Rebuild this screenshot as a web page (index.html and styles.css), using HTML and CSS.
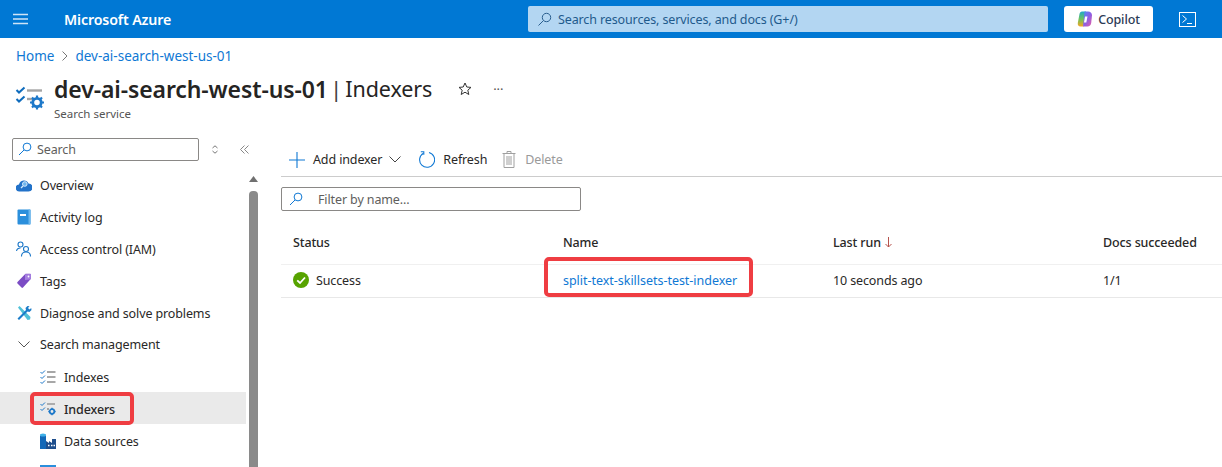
FILE: index.html
```html
<!DOCTYPE html>
<html lang="en">
<head>
<meta charset="utf-8">
<title>Indexers</title>
<link rel="stylesheet" href="styles.css">
</head>
<body>
<header class="topbar">
  <button class="hamburger" aria-label="Menu"><svg width="15" height="12" viewBox="0 0 15 12"><path d="M0 1.500h15M0 6h15M0 10.500h15" stroke="#cfe4f6" stroke-width="1.300" fill="none"/></svg></button>
  <div class="brand">Microsoft Azure</div>
  <div class="global-search">
    <svg width="15" height="15" viewBox="0 0 15 15" fill="none" stroke="#2a5f8f" stroke-width="1"><circle cx="9.500" cy="5.500" r="4.200"/><path d="M6.500 8.500 1.500 13.500"/></svg>
    <span>Search resources, services, and docs (G+/)</span>
  </div>
  <button class="copilot">
    <svg width="16" height="16" viewBox="0 0 16 16"><defs><linearGradient id="cpa" x1="0" y1="0" x2="1" y2="1"><stop offset="0" stop-color="#4a8ff0"/><stop offset="0.5" stop-color="#8a5fe6"/><stop offset="1" stop-color="#ee5fa0"/></linearGradient><linearGradient id="cpb" x1="0.500" y1="1" x2="0.500" y2="0"><stop offset="0" stop-color="#f6a623"/><stop offset="0.5" stop-color="#6cc35c"/><stop offset="1" stop-color="#1fa9c9"/></linearGradient></defs><path d="M5 .5h4L6.500 15.500H3.500C1.500 15.500.5 14 .8 12L2.500 3C2.800 1.400 3.700.5 5 .5Z" fill="url(#cpb)"/><path d="M7.500.5h3.500c2.500 0 4.200 1.700 4 4l-.8 7.500c-.3 2.200-1.700 3.500-3.700 3.500H6Z" fill="url(#cpa)"/><path d="M8 5.500h2.500L9.300 11.500H7Z" fill="#fff"/></svg>
    <span>Copilot</span>
  </button>
  <button class="shell" aria-label="Cloud Shell"><svg width="17" height="15" viewBox="0 0 17 15" fill="none" stroke="#fff" stroke-width="1"><rect x=".5" y=".5" width="16" height="14"/><path d="M3.500 3.500 7.500 7 3.500 10.500M8 11.500h5"/></svg></button>
</header>

<nav class="crumbs"><a>Home</a><svg class="crumb-sep" width="6" height="10" viewBox="0 0 6 10" fill="none" stroke="#777" stroke-width="1"><path d="M.5.500 5 5 .5 9.500"/></svg><a>dev-ai-search-west-us-01</a></nav>

<section class="title-block">
  <svg class="title-icon" width="30" height="30" viewBox="0 0 30 30" fill="none">
    <path d="M1.500 6l2.500 2.500L9.500 3.500M1.500 15l2.500 2.500 5.500-5" stroke="#0f6cbd" stroke-width="2"/>
    <path d="M12 6.500h15" stroke="#a5a5a5" stroke-width="2.400"/><path d="M12 15h6" stroke="#a5a5a5" stroke-width="2.400"/>
    <circle cx="22" cy="18.500" r="4.200" stroke="#1d78c9" stroke-width="2.800"/>
    <path d="M22 11.500v3M22 22.500v3M15 18.500h3M26 18.500h3M17 13.500l2 2M25 21.500l2 2M17 23.500l2-2M25 15.500l2-2" stroke="#1d78c9" stroke-width="2.200"/>
  </svg>
  <div class="title-text">
    <div class="title-row">
      <h1><strong>dev-ai-search-west-us-01</strong><span class="pipe">|</span><span class="blade">Indexers</span></h1>
      <svg class="star" width="14" height="14" viewBox="0 0 14 14" fill="none" stroke="#333" stroke-width="1"><path d="M7 1l1.800 4 4.200.4-3.200 2.800 1 4.300L7 10.200 3.200 12.500l1-4.300L1 5.400 5.200 5Z"/></svg>
      <span class="more">···</span>
    </div>
    <div class="subtitle">Search service</div>
  </div>
</section>

<div class="workspace">
  <aside class="sidebar">
    <div class="side-tools">
      <div class="side-search">
        <svg width="14" height="14" viewBox="0 0 14 14" fill="none" stroke="#0f78d4" stroke-width="1"><circle cx="9" cy="5" r="3.900"/><path d="M6 8 1 13"/></svg>
        <span>Search</span>
      </div>
      <svg class="updown" width="8" height="9" viewBox="0 0 8 9" fill="none" stroke="#777" stroke-width="1"><path d="M1.500 3 4 .8 6.500 3 M1.500 6 4 8.200 6.500 6"/></svg>
      <svg class="collapse" width="9" height="9" viewBox="0 0 9 9" fill="none" stroke="#888" stroke-width="1"><path d="M4.500.5.500 4.500l4 4M8.500.5l-4 4 4 4"/></svg>
    </div>
    <div class="nav-wrap">
      <ul class="nav">
        <li class="nav-item"><svg class="ico" width="16" height="16" viewBox="0 0 16 16"><path d="M3.500 14.500a3.500 3.500 0 0 1-.5-7A5 5 0 0 1 12.500 6.500a4 4 0 0 1 0 8Z" fill="#2272c9"/><circle cx="8.800" cy="7" r="2.300" fill="#6db3ec" stroke="#d5eafb" stroke-width="1"/><path d="M7 9 5 11" stroke="#d5eafb" stroke-width="1.300"/></svg>Overview</li>
        <li class="nav-item"><svg class="ico" width="16" height="16" viewBox="0 0 16 16"><rect x="1.500" y="0.500" width="13" height="15" rx="1" fill="#2b8fdc"/><rect x="12.500" y="0.500" width="2" height="15" fill="#6cb8ee"/><rect x="4" y="5" width="6" height="2" fill="#fff"/></svg>Activity log</li>
        <li class="nav-item"><svg class="ico" width="16" height="16" viewBox="0 0 16 16" fill="none" stroke="#1d78c9" stroke-width="1.100"><circle cx="4.500" cy="3.500" r="2.500"/><path d="M.5 10c.4-2 2-3 4-3"/><circle cx="10" cy="8" r="2.500"/><path d="M5.500 15.500c0-3 2-4.500 4.500-4.500s4.500 1.500 4.500 4.500"/></svg>Access control (IAM)</li>
        <li class="nav-item"><svg class="ico" width="16" height="16" viewBox="0 0 16 16"><path d="M1.500 9 9 1.200c.4-.4.800-.5 1.200-.5h4c.5 0 .8.300.8.800l-.2 4c0 .4-.2.800-.5 1.100L7 14.500c-.5.500-1 .5-1.500 0L1.500 10.500c-.5-.5-.5-1 0-1.500Z" fill="#7b4cc4"/><path d="M9 1.200 14.800 1l.2.500-.2 4c0 .4-.2.800-.5 1.100L9 7Z" fill="#a67fe0"/><circle cx="12.500" cy="3.500" r=".9" fill="#fff"/></svg>Tags</li>
        <li class="nav-item"><svg class="ico" width="16" height="16" viewBox="0 0 16 16"><path d="M2 2.500 3.500 1 14.500 12l-.5 2.500-2.500.5Z" fill="#50c1d8"/><path d="M11.500 1 9.500 3l.5 2-8.500 8.500 1.500 1.500 8.500-8.500 2 .5 2-2-.3-2-1.700 1.500L12 3l1.500-1.700Z" fill="#1c7dc9"/></svg>Diagnose and solve problems</li>
        <li class="nav-item group"><svg class="ico chev" width="12" height="7" viewBox="0 0 12 7" fill="none" stroke="#555" stroke-width="1"><path d="M.5.500 6 6 11.500.500"/></svg>Search management</li>
        <li class="nav-item sub"><svg class="ico" width="16" height="16" viewBox="0 0 16 16" fill="none"><path d="M.5 3l1.500 1.500L5 1.500M.5 8l1.500 1.500L5 6.500M.5 13l1.500 1.500L5 11.500" stroke="#1d78c9" stroke-width="1"/><path d="M7 3h8.500M7 8h8.500M7 13h8.500" stroke="#8a8a8a" stroke-width="1.300"/></svg>Indexes</li>
        <li class="nav-item sub selected"><svg class="ico" width="16" height="16" viewBox="0 0 16 16" fill="none"><path d="M.5 3l1.500 1.500L5 1.500M.5 8l1.500 1.500L5 6.500" stroke="#1d78c9" stroke-width="1"/><path d="M7 3h8" stroke="#8a8a8a" stroke-width="1.300"/><path d="M7 8h2" stroke="#8a8a8a" stroke-width="1.300"/><circle cx="12" cy="10.500" r="2.300" stroke="#1d78c9" stroke-width="1.700"/><path d="M12 6.800v1.200M12 13v1.200M8.300 10.500h1.200M14.500 10.500h1.200" stroke="#1d78c9" stroke-width="1.300"/></svg>Indexers<span class="callout callout-nav"></span></li>
        <li class="nav-item sub"><svg class="ico" width="16" height="16" viewBox="0 0 16 16"><path d="M0 2.500h6V16H0Z" fill="#1268b8"/><ellipse cx="3" cy="2" rx="3" ry="1.500" fill="#3fb0e8"/><path d="M6 8l3 2V8l3 2V6l4 0v10H6Z" fill="#1e4e8c"/><path d="M8 12.500h1.500M11 12.500h1.500M13.500 12.500H15" stroke="#fff" stroke-width="1.400"/></svg>Data sources</li>
        <li class="nav-item sub"><svg class="ico" width="16" height="16" viewBox="0 0 16 16"><rect x="0" y="0" width="16" height="16" fill="#2b8fdc"/></svg></li>
      </ul>
      <div class="scrollbar">
        <svg class="scroll-arrow" width="9" height="6" viewBox="0 0 9 6"><path d="M4.500 0 9 6H0Z" fill="#707070"/></svg>
        <div class="scroll-thumb"></div>
      </div>
    </div>
  </aside>

  <main class="main">
    <div class="commands">
      <button class="cmd cmd-add">
        <svg width="16" height="16" viewBox="0 0 16 16" stroke="#0f78d4" stroke-width="1.100"><path d="M8 0v16M0 8h16"/></svg>
        <span>Add indexer</span>
        <svg width="12" height="7" viewBox="0 0 12 7" fill="none" stroke="#444" stroke-width="1"><path d="M.5.500 6 6 11.500.500"/></svg>
      </button>
      <button class="cmd cmd-refresh">
        <svg width="17" height="17" viewBox="0 0 17 17" fill="none" stroke="#0f78d4" stroke-width="1.100"><path d="M5.500 2.200A7.500 7.500 0 1 0 11 1.500"/><path d="M2.800 .8h3v3"/></svg>
        <span>Refresh</span>
      </button>
      <button class="cmd cmd-delete">
        <svg width="14" height="17" viewBox="0 0 14 17" fill="none" stroke="#a0a0a0" stroke-width="1"><path d="M.5 2.500h13M5 2.500V.5h4v2M2 2.500v14h10v-14M5 5v9M7 5v9M9 5v9"/></svg>
        <span>Delete</span>
      </button>
    </div>
    <div class="filter">
      <svg width="14" height="14" viewBox="0 0 14 14" fill="none" stroke="#0f78d4" stroke-width="1"><circle cx="9" cy="5" r="3.900"/><path d="M6 8 1 13"/></svg>
      <span>Filter by name...</span>
    </div>
    <div class="table">
      <div class="row head">
        <div class="cell">Status</div>
        <div class="cell">Name</div>
        <div class="cell sort-cell">Last run <svg width="7" height="11" viewBox="0 0 7 11" fill="none" stroke="#b5524c" stroke-width="1"><path d="M3.500 0v10M.5 7l3 3 3-3"/></svg></div>
        <div class="cell">Docs succeeded</div>
      </div>
      <div class="row body-row">
        <div class="cell status"><svg width="16" height="16" viewBox="0 0 16 16"><circle cx="8" cy="8" r="8" fill="#57a300"/><path d="M4.200 8.300 7 11l5-5.500" fill="none" stroke="#fff" stroke-width="1.800"/></svg>Success</div>
        <div class="cell name"><a>split-text-skillsets-test-indexer</a><span class="callout callout-name"></span></div>
        <div class="cell">10 seconds ago</div>
        <div class="cell">1/1</div>
      </div>
    </div>
  </main>
</div>
</body>
</html>
```
FILE: styles.css
```css
* { box-sizing: border-box; }
html, body { margin: 0; height: 467px; overflow: hidden; }
body {
  font-family: "Noto Sans", "Open Sans", "Liberation Sans", sans-serif;
  font-size: 12.500px;
  letter-spacing: -0.12px;
  color: #292827;
  background: #fff;
  display: flex;
  flex-direction: column;
}
button { font: inherit; letter-spacing: inherit; border: 0; background: none; padding: 0; color: inherit; }
svg { display: block; flex: none; }

.topbar {
  height: 38px;
  flex: none;
  background: #0078d4;
  display: flex;
  align-items: center;
  color: #fff;
}
.hamburger { margin-left: 13px; width: 15px; }
.brand { margin-left: 36px; width: 464px; font-size: 14.200px; font-weight: 600; }
.global-search {
  width: 520px;
  height: 26px;
  background: #b3d6f2;
  border-radius: 2px;
  display: flex;
  align-items: center;
  gap: 6px;
  padding-left: 9px;
  color: #1f5a8c;
}
.copilot {
  margin-left: 16px;
  width: 89px;
  height: 26px;
  background: #fff;
  border-radius: 3px;
  display: flex;
  align-items: center;
  justify-content: center;
  gap: 5px;
  color: #2b3a55;
  font-weight: 500;
}
.shell { margin-left: 26px; }

.crumbs {
  height: 36px;
  padding: 0 0 1px 16px;
  display: flex;
  align-items: center;
  gap: 7.500px;
  color: #0f78d4;
  flex: none;
  font-size: 13.500px;
  letter-spacing: 0;
}
.title-block { display: flex; padding-left: 15px; height: 52px; flex: none; }
.title-icon { margin-top: 10px; }
.title-text { margin-left: 9px; }
.title-row { display: flex; align-items: center; height: 30px; }
h1 { margin: 0; font-size: 23px; font-weight: 400; line-height: 30px; color: #252423; white-space: nowrap; display: flex; letter-spacing: 0; }
h1 strong { font-weight: 600; letter-spacing: -0.1px; }
.pipe { color: #444; margin-left: 2px; font-size: 22.500px; }
.blade { font-size: 21.500px; margin-left: 3px; letter-spacing: -0.1px; }
.star { margin-left: 26px; }
.more { margin-left: 21px; color: #555; font-size: 13px; }
.subtitle { font-size: 11.500px; color: #555; margin-top: 2px; letter-spacing: 0; }

.workspace { display: flex; flex: 1; min-height: 0; margin-top: 11px; overflow: hidden; }
.sidebar { width: 281px; flex: none; display: flex; flex-direction: column; min-height: 0; }
.side-tools { display: flex; align-items: center; height: 24px; padding-left: 12px; flex: none; }
.side-search {
  width: 187px;
  height: 23px;
  border: 1px solid #8a8886;
  border-radius: 2px;
  display: flex;
  align-items: center;
  gap: 5px;
  padding-left: 5px;
  color: #605e5c;
}
.updown { margin-left: 12px; }
.collapse { margin-left: 21px; }
.nav-wrap { display: flex; margin-top: 8px; flex: 1; min-height: 0; overflow: hidden; }
.nav { list-style: none; margin: 0; padding: 0; width: 246px; flex: none; }
.nav-item {
  height: 32px;
  display: flex;
  align-items: center;
  gap: 8px;
  padding-left: 16px;
  position: relative;
  white-space: nowrap;
}
.nav-item.group { height: 31px; padding-left: 18px; gap: 10px; }
.nav-item.sub { padding-left: 40px; padding-top: 2px; height: 32px; }
.nav-item.selected { background: #eaeaea; font-weight: 500; }
.callout {
  position: absolute;
  border: 4px solid #ef3d42;
  border-radius: 5px;
  pointer-events: none;
}
.callout-nav { left: 30px; top: 0; width: 104px; height: 33px; }
.scrollbar { width: 9px; margin-left: 3px; flex: none; display: flex; flex-direction: column; }
.scroll-arrow { margin: 7px 0 0 0; }
.scroll-thumb { margin-top: 9px; flex: 1; width: 9px; background: #8a8a8a; border-radius: 4px 4px 0 0; }

.main { flex: 1; min-width: 0; }
.commands {
  height: 40px;
  padding: 6px 0 0 8px;
  border-bottom: 1px solid #ccc;
  display: flex;
  align-items: center;
}
.cmd { display: flex; align-items: center; }
.cmd-add { gap: 8px; }
.cmd-refresh { margin-left: 17px; gap: 8px; }
.cmd-delete { margin-left: 15px; gap: 9px; color: #9a9a9a; }
.cmd-add svg:last-child { margin-left: -1px; }
.filter {
  margin-top: 10px;
  width: 300px;
  height: 24px;
  border: 1px solid #8a8886;
  border-radius: 2px;
  display: flex;
  align-items: center;
  gap: 15px;
  padding-left: 7px;
  color: #605e5c;
}
.table { margin-top: 9px; }
.row { display: grid; grid-template-columns: 270px 270px 270px 1fr; padding-left: 12px; align-items: center; }
.head { height: 45px; border-bottom: 1px solid #f0f0f0; font-weight: 500; }
.body-row { height: 33px; padding-bottom: 2px; border-bottom: 1px solid #e8e8e8; }
.cell { white-space: nowrap; }
.sort-cell { display: flex; align-items: center; gap: 4px; }
.status { display: flex; align-items: center; gap: 7px; }
.name { position: relative; color: #0f78d4; letter-spacing: -0.03px; }
.name a { color: inherit; }
.callout-name { left: -19px; top: -15px; width: 209px; height: 40px; }
```
